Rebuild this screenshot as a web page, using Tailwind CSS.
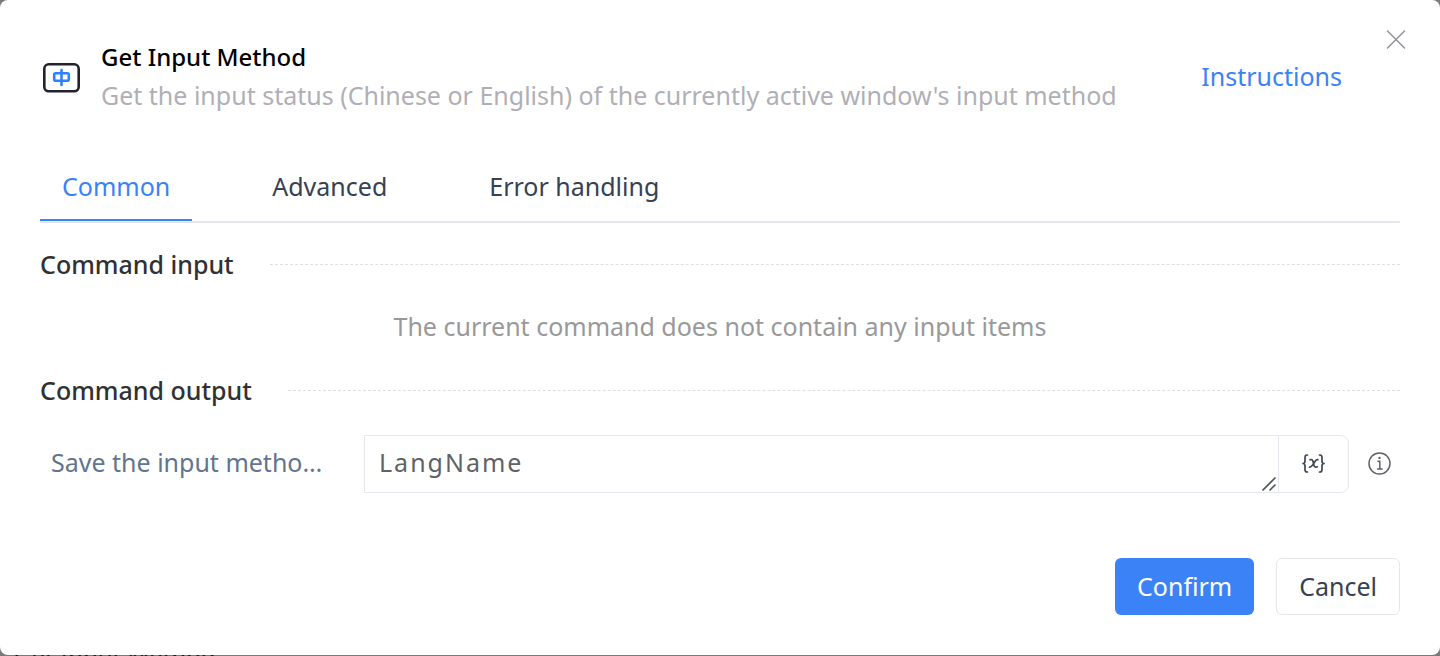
<!DOCTYPE html>
<html lang="en">
<head>
<meta charset="utf-8">
<meta name="viewport" content="width=device-width, initial-scale=1">
<title>Get Input Method</title>
<script src="https://cdn.jsdelivr.net/npm/@tailwindcss/browser@4"></script>
</head>
<body class="h-screen overflow-hidden bg-[#7a7a7a] font-['Noto_Sans','Open_Sans',sans-serif] text-[25px] leading-9 text-gray-700">
<main role="dialog" aria-labelledby="title" class="relative rounded-lg bg-white px-10 pt-[38px] pb-10">
  <button type="button" aria-label="Close" class="absolute top-7 right-8 flex size-6 items-center justify-center text-[#909399]">
    <svg class="size-5" viewBox="0 0 20 20" fill="none" stroke="currentColor" stroke-width="1.500" stroke-linecap="round"><path d="M1.500 1l17 17M18.500 1l-17 17"/></svg>
  </button>

  <header class="flex items-center">
    <svg class="mr-5 h-10 w-[41px] shrink-0" viewBox="0 0 41 40" fill="none" stroke-linejoin="round" stroke-linecap="round">
      <rect x="4.300" y="8.300" width="34.400" height="27" rx="4.500" stroke="#22212e" stroke-width="2.600"/>
      <rect x="14.200" y="17.200" width="14.600" height="7.600" rx="1.500" stroke="#2d82fd" stroke-width="2.600"/>
      <path d="M21.500 14v15" stroke="#2d82fd" stroke-width="2.600"/>
    </svg>
    <div class="min-w-0 flex-1 leading-[38px]">
      <h1 id="title" class="text-2xl leading-[38px] font-medium text-black">Get Input Method</h1>
      <p class="whitespace-nowrap text-[#b0afb6]">Get the input status (Chinese or English) of the currently active window's input method</p>
    </div>
    <a href="#" class="mr-[58px] text-[#3b82f6]">Instructions</a>
  </header>

  <nav class="mt-[42px] flex h-[67px] gap-[58px] border-b-2 border-[#e4e7ed]" role="tablist">
    <button type="button" role="tab" aria-selected="true" class="border-b-2 border-[#3b82f6] px-[22px] pb-1 text-[#3b82f6]">Common</button>
    <button type="button" role="tab" aria-selected="false" class="border-b-2 border-transparent px-[22px] pb-1">Advanced</button>
    <button type="button" role="tab" aria-selected="false" class="border-b-2 border-transparent px-[22px] pb-1">Error handling</button>
  </nav>

  <section class="mt-[23px]">
    <div class="flex items-center gap-9">
      <h2 class="font-medium text-[#303133]">Command input</h2>
      <div class="flex-1 border-t border-dashed border-[#dcdfe6]"></div>
    </div>
    <p class="mt-[26px] text-center text-[#999999]">The current command does not contain any input items</p>
  </section>

  <section class="mt-7">
    <div class="flex items-center gap-9">
      <h2 class="font-medium text-[#303133]">Command output</h2>
      <div class="flex-1 border-t border-dashed border-[#dcdfe6]"></div>
    </div>
    <div class="mt-[27px] flex items-center">
      <label for="out" class="w-[324px] shrink-0 truncate pr-8 pb-1 pl-[11px] text-slate-500">Save the input method to</label>
      <div class="flex h-[58px] flex-1 rounded-r-lg border border-[#e4e7ed]">
        <div class="relative flex-1">
          <textarea id="out" rows="1" class="block h-full w-full resize-none overflow-hidden px-3.5 py-2 tracking-[2px] text-[#606266] outline-none">LangName</textarea>
          <svg class="absolute right-0 bottom-0 size-4" viewBox="0 0 16 16" fill="none" stroke="#555" stroke-width="1.600"><path d="M.5 14.500L13.500 1.500M7.500 14.500L13.500 8.500"/></svg>
        </div>
        <button type="button" aria-label="Insert variable" class="flex w-[70px] items-center justify-center border-l border-[#e4e7ed]">
          <svg class="h-5 w-6" viewBox="0 0 24 20" fill="none" stroke="#3d4757" stroke-width="1.700" stroke-linecap="round" stroke-linejoin="round">
            <path d="M5.500 1H5C3.500 1 3 2 3 3.500V7C3 8.500 2.300 9.500 1 9.500c1.300 0 2 1 2 2.500v3.500c0 1.500.5 2.500 2 2.500h.5"/>
            <path d="M17.500 1h.5c1.500 0 2 1 2 2.500V7C20 8.500 20.700 9.500 22 9.500c-1.300 0-2 1-2 2.500v3.500c0 1.500-.5 2.500-2 2.500h-.5"/>
            <path d="M8 5.800c3-1 3 1.500 3.500 3.700s.8 4.500 3.800 3.300M15.800 5.700c-1.800-.4-2.800 1.800-4.200 3.800s-2.200 4-4.100 3.600"/>
          </svg>
        </button>
      </div>
      <button type="button" aria-label="Help" class="mr-2 ml-[19px] text-[#606266]">
        <svg class="block size-6" viewBox="0 0 24 24" fill="none" stroke="currentColor" stroke-width="1.500" stroke-linecap="round">
          <circle cx="11.500" cy="11.500" r="10.500"/><path d="M10 9.300H11.800V16.800M9.500 17h4.600"/><circle cx="11.500" cy="5.900" r="1.200" fill="currentColor" stroke="none"/>
        </svg>
      </button>
    </div>
  </section>

  <footer class="mt-[65px] flex justify-end gap-[22px]">
    <button type="button" class="h-[57px] rounded-md bg-[#3b82f6] px-[22px] pb-0.5 text-white">Confirm</button>
    <button type="button" class="h-[57px] rounded-md border border-gray-200 px-[22px] pb-0.5">Cancel</button>
  </footer>
</main>
<p class="px-3.5 text-2xl leading-0.5 text-[#15151f]">Get Input Method</p>
</body>
</html>
